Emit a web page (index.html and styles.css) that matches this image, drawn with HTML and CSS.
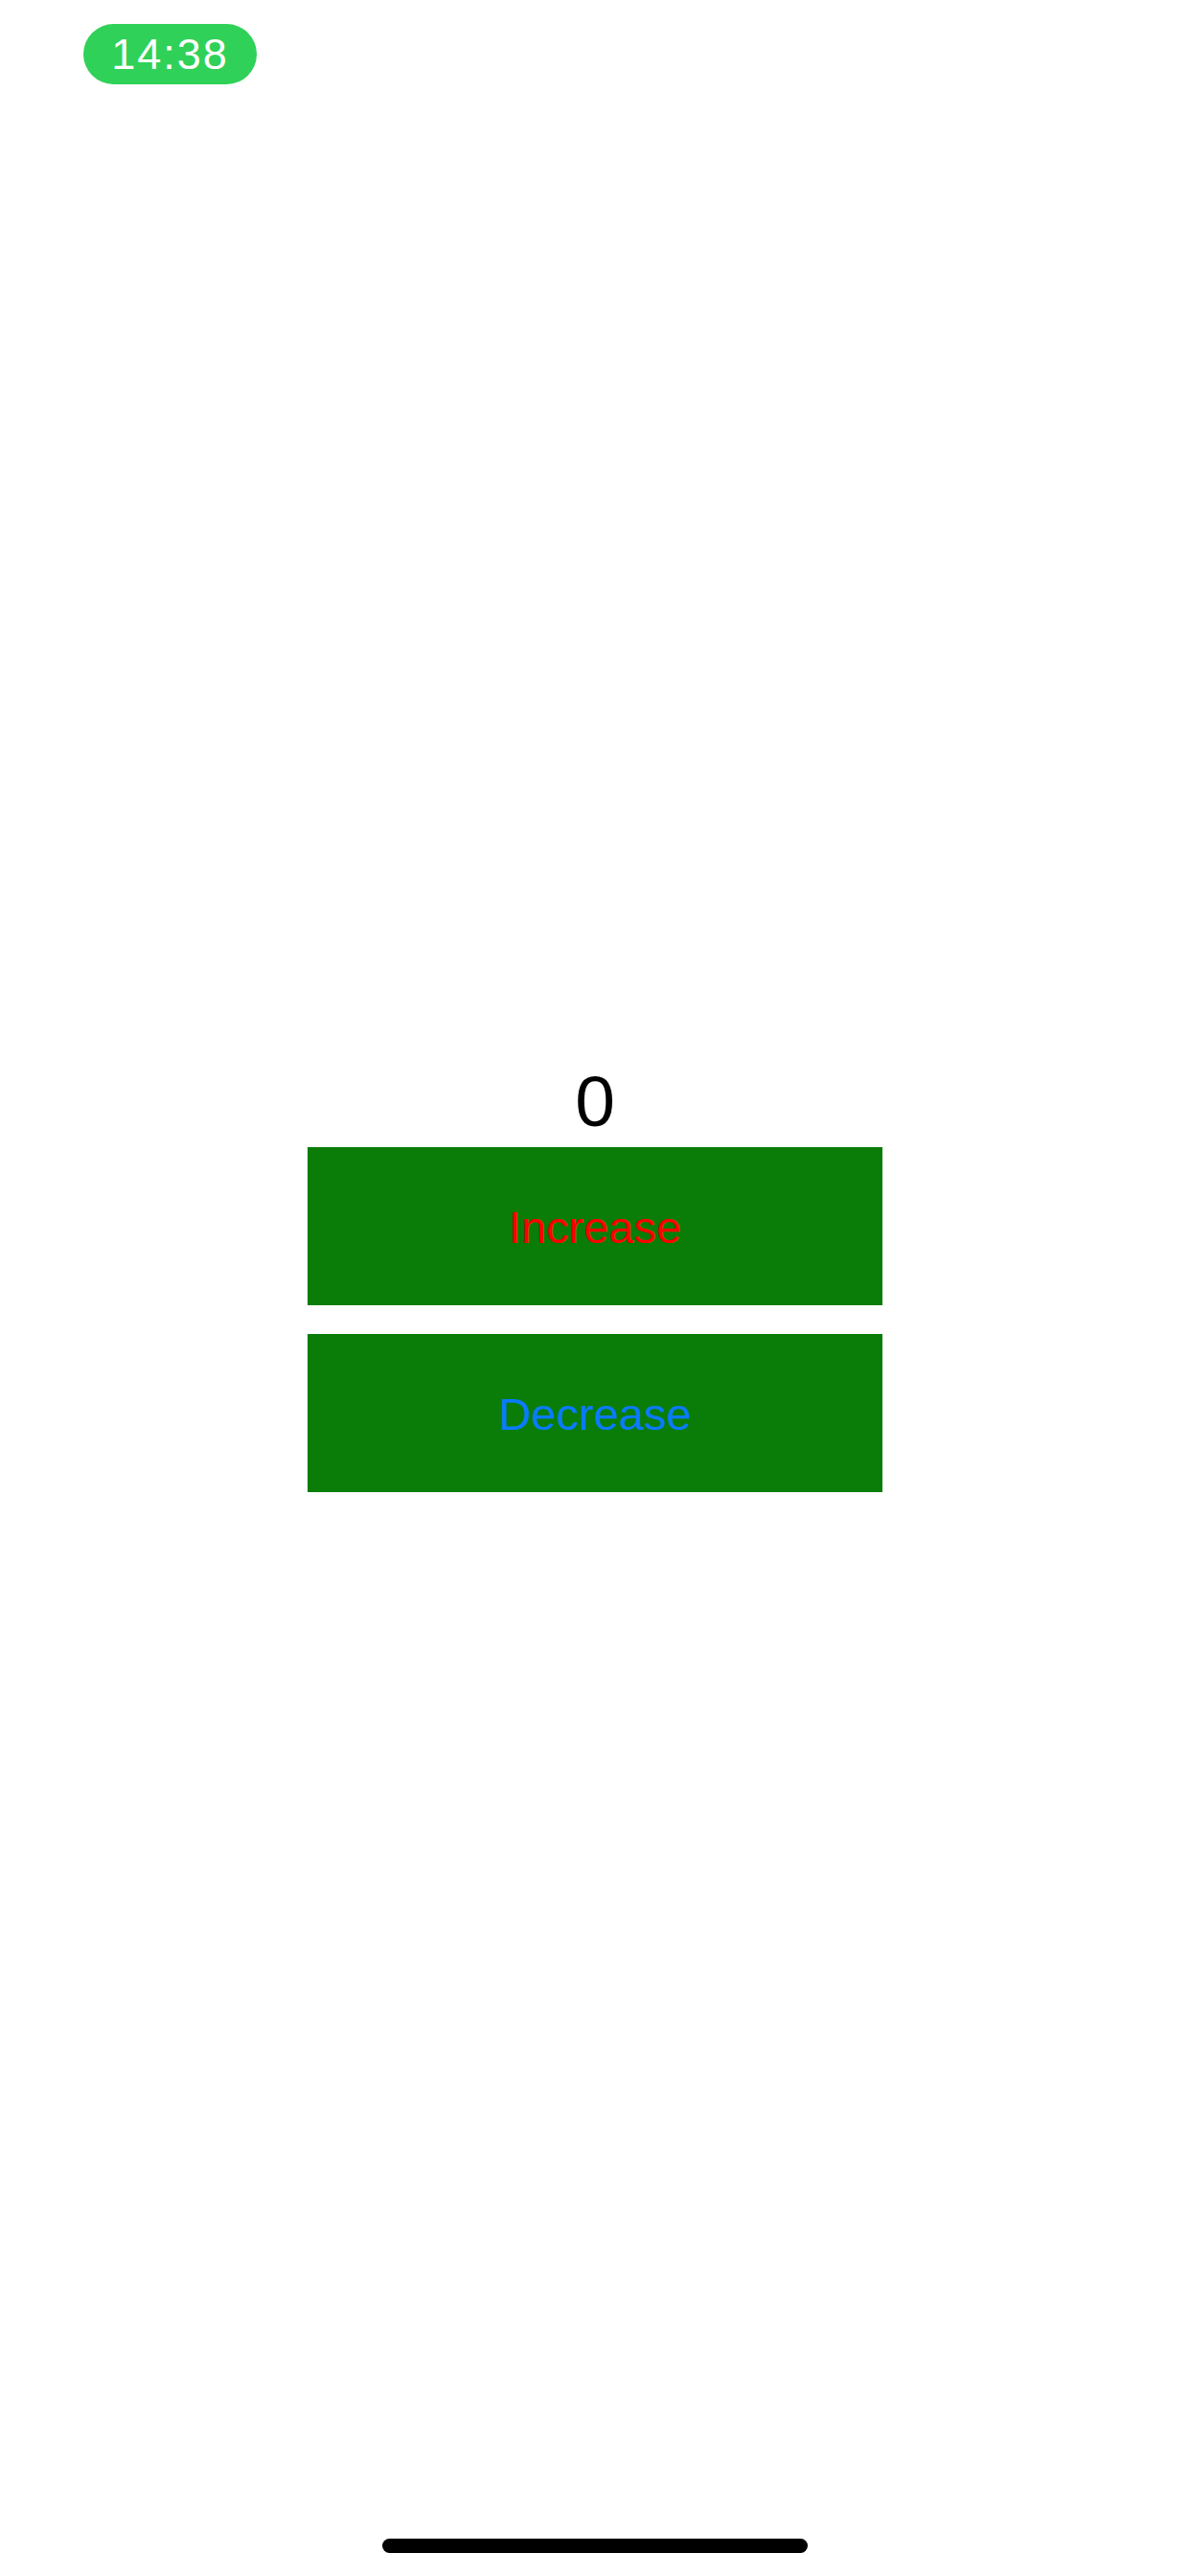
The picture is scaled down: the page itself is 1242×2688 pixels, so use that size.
FILE: index.html
```html
<!DOCTYPE html>
<html lang="en">
<head>
  <meta charset="UTF-8">
  <meta name="viewport" content="width=device-width, initial-scale=1.0">
  <title>Counter</title>
  <link rel="stylesheet" href="styles.css">
</head>
<body>

  <!-- Status bar -->
  <div class="status-bar">
    <span class="time-pill">14:38</span>
  </div>

  <div class="screen">
    <div class="counter">
      <div class="count" id="count">0</div>
      <button class="btn btn-increase" id="increase">Increase</button>
      <button class="btn btn-decrease" id="decrease">Decrease</button>
    </div>
  </div>

  <div class="home-indicator"></div>

  <script>
    let count = 0;
    const countEl = document.getElementById("count");

    document.getElementById("increase").addEventListener("click", () => {
      count++;
      countEl.textContent = count;
    });

    document.getElementById("decrease").addEventListener("click", () => {
      count--;
      countEl.textContent = count;
    });
  </script>

</body>
</html>
```

FILE: styles.css
```css
body {
  font-family: "Liberation Sans", Arial, sans-serif;
  margin: 0;
  padding: 0;
  height: 2688px;
  background-color: #fff;
  color: #000;
  display: flex;
  flex-direction: column;
  position: relative;
  overflow: hidden;
}

.status-bar {
  padding: 25px 0 0 87px;
  display: flex;
}

.time-pill {
  width: 181px;
  height: 63px;
  border-radius: 32px;
  background-color: #30d158;
  color: #fff;
  font-size: 45px;
  letter-spacing: 2px;
  display: flex;
  align-items: center;
  justify-content: center;
}

.screen {
  flex: 1;
  display: flex;
  justify-content: center;
  align-items: center;
  padding-bottom: 115px;
}

.counter {
  width: 600px;
  display: flex;
  flex-direction: column;
  align-items: center;
}

.count {
  font-size: 75px;
  line-height: 86px;
  margin-bottom: 5px;
  padding-top: 2px;
}

.btn {
  width: 600px;
  height: 165px;
  border: none;
  border-radius: 0;
  background-color: #0a7d08;
  font-family: "Liberation Sans", Arial, sans-serif;
  font-size: 47px;
  padding-top: 3px;
  cursor: pointer;
}

.btn-increase {
  color: #ff0000;
  margin-bottom: 30px;
}

.btn-decrease {
  color: #0a7aff;
}

.home-indicator {
  position: absolute;
  left: 399px;
  bottom: 24px;
  width: 444px;
  height: 15px;
  border-radius: 8px;
  background-color: #000;
}
```
